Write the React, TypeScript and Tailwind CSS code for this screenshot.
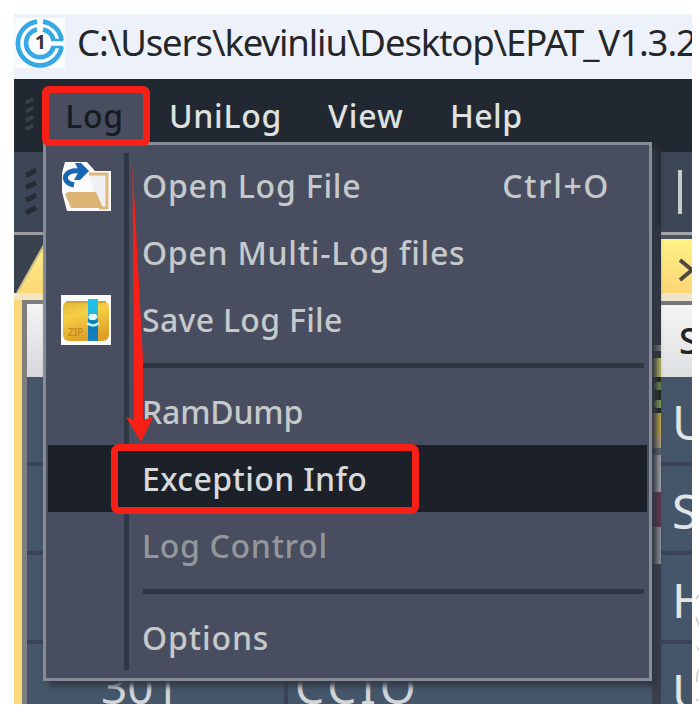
import React from "react";

type Entry = {
  label: string;
  text: string;
  shortcut?: string;
  icon?: React.ReactNode;
  row?: string;
};

function AppLogo() {
  return (
    <svg viewBox="0 0 50 50" className="h-[50px] w-[50px] shrink-0" fill="none">
      <rect width="50" height="50" fill="#fbfdff" />
      <g stroke="#35a9e5" strokeWidth="4.6">
        <path d="M22 3.6A22 22 0 1 0 46.6 29" />
        <path d="M28 3.6A22 22 0 0 1 46.6 22" />
        <path d="M22 11.5A14 14 0 1 0 38.5 29" />
        <path d="M28 11.5A14 14 0 0 1 38.5 22" />
        <path d="M36 22H48M36 29H48" strokeWidth="2.5" />
      </g>
      <text x="20" y="31" fontSize="19" fontWeight="700" fontFamily="Noto Sans" fill="#33323c">1</text>
    </svg>
  );
}

function FolderIcon() {
  return (
    <svg viewBox="0 0 50 50" className="h-[50px] w-[50px]">
      <path d="M4 1H26L34 10H50V50H6L1 31V12Z" fill="#fbfbfb" />
      <path d="M28 13H46V47H38" fill="#f0eff2" stroke="#dfb77c" strokeWidth="3" />
      <path d="M4 33L7 31H35L42 47H10Z" fill="#dcb474" />
      <path d="M13 24C-1 21 3 8 18 10" fill="none" stroke="#1767b3" strokeWidth="5" />
      <path d="M14 2H20L28 10L19 19H13L17 12H13V8H17Z" fill="#1767b3" />
    </svg>
  );
}

function ZipIcon() {
  return (
    <svg viewBox="0 0 50 50" className="h-[50px] w-[50px]">
      <defs>
        <linearGradient id="gold" x1="0" y1="0" x2="0.3" y2="1">
          <stop offset="0" stopColor="#dfb53a" />
          <stop offset="0.4" stopColor="#f6cf45" />
          <stop offset="1" stopColor="#dfa025" />
        </linearGradient>
        <linearGradient id="zipper" x1="0" y1="0" x2="0" y2="1">
          <stop offset="0" stopColor="#22c5e9" />
          <stop offset="0.35" stopColor="#28b6df" />
          <stop offset="0.55" stopColor="#087cba" />
          <stop offset="1" stopColor="#167fc0" />
        </linearGradient>
      </defs>
      <rect width="50" height="50" fill="#fafafa" />
      <rect x="2" y="6" width="46" height="40" rx="6" fill="url(#gold)" />
      <path d="M5 7H45" stroke="#c79a2a" strokeWidth="1.5" />
      <rect x="27" y="4" width="10" height="42" fill="url(#zipper)" />
      <path d="M29 19H35L37 22L34 25H29L27 22Z" fill="#dff8ff" />
      <path d="M26 28Q32 33 38 28" fill="none" stroke="#c5effb" strokeWidth="2.5" />
      <text x="7" y="41" fontSize="10" fontFamily="Noto Sans" fill="#b98220">ZIP</text>
    </svg>
  );
}

const groups: Entry[][] = [
  [
    { label: "Open Log File", text: "tracking-[0.8px] text-[#c5c9ca]", shortcut: "Ctrl+O", icon: <FolderIcon /> },
    { label: "Open Multi-Log files", text: "tracking-[0.75px] text-[#c5c9ca]" },
    { label: "Save Log File", text: "tracking-[0.3px] text-[#c5c9ca]", icon: <ZipIcon /> },
  ],
  [
    { label: "RamDump", text: "tracking-[-0.2px] text-[#c5c9ca]" },
    { label: "Exception Info", text: "tracking-[0.4px] text-[#d6dadb]", row: "bg-[#1c2129]" },
    { label: "Log Control", text: "tracking-[0.7px] text-[#949799]" },
  ],
  [{ label: "Options", text: "tracking-[0.9px] text-[#c5c9ca]" }],
];

function Menu() {
  return (
    <div className="absolute left-[43px] top-[142px] z-10 h-[539px] w-[609px] border-[3px] border-[#858c98] bg-[#484e60] pt-[7px] shadow-[5px_5px_6px_#303743]">
      <div className="absolute bottom-[8px] left-[78px] top-[8px] w-[5px] bg-[#303744]" />
      {groups.map((group, index) => (
        <div key={index} className="relative">
          {index > 0 && (
            <div className="flex h-[25px] items-center pl-[97px] pr-[5px]">
              <div className="h-[5px] w-full bg-[#303641]" />
            </div>
          )}
          {group.map((entry) => (
            <div key={entry.label} className={`mx-[2px] flex h-[67px] items-center ${entry.row ?? ""}`}>
              <div className="flex w-[94px] shrink-0 pl-[13px]">{entry.icon}</div>
              <span className={`whitespace-nowrap text-[32px] font-medium leading-none ${entry.text}`}>{entry.label}</span>
              {entry.shortcut && <span className="ml-auto mr-[37px] text-[32px] font-medium leading-none tracking-[1.6px] text-[#c5c9ca]">{entry.shortcut}</span>}
            </div>
          ))}
        </div>
      ))}
    </div>
  );
}

function Grip({ className }: { className: string }) {
  return (
    <svg viewBox="0 0 12 50" preserveAspectRatio="none" className={className}>
      <path d="M1 9L11 4M1 21L11 16M1 33L11 28M1 45L11 40" stroke="currentColor" strokeWidth="5" />
    </svg>
  );
}

const cells = ["U", "S", "H"];

function RightPane() {
  return (
    <div className="flex w-[31px] shrink-0 flex-col overflow-hidden bg-[#46566a]">
      <div className="flex h-[80px] shrink-0 justify-center bg-[#3c4656] pl-[7px] pt-[18px]">
        <div className="h-[44px] w-[4px] bg-[#c8cbd0]" />
      </div>
      <div className="h-[7px] shrink-0 border-t-[3px] border-[#a6a7aa] bg-[#4c5361]" />
      <div className="flex h-[54px] shrink-0 items-center bg-linear-to-b from-[#fff286] to-[#fcd575] pl-[17px] pt-[8px]">
        <svg viewBox="0 0 24 24" className="h-[24px] w-[24px] shrink-0" fill="none" stroke="#4b4940" strokeWidth="4">
          <path d="M2 2L14 12L2 22M26 2L14 12L26 22" />
        </svg>
      </div>
      <div className="h-[12px] shrink-0 border-b-[4px] border-[#77777b] bg-[#eee5cf]" />
      <div className="flex h-[72px] shrink-0 items-center bg-linear-to-b from-[#f5f5f5] to-[#dedfe1] pl-[18px] text-[36px] font-medium text-[#222326]">S</div>
      {cells.map((cell) => (
        <div key={cell} className="flex h-[89px] shrink-0 items-center border-b-[4px] border-[#3b435a] pl-[11px] pt-[5px] text-[48px] leading-none text-[#e2e5e7]">{cell}</div>
      ))}
      <div className="h-[60px] shrink-0 pl-[11px] pt-[17px] text-[48px] leading-[60px] text-[#e2e5e7]">U</div>
    </div>
  );
}

function HiddenIcons() {
  return (
    <div className="flex w-[9px] shrink-0 flex-col bg-[#383f4d]">
      <div className="h-[73px] shrink-0 bg-[#242a34]" />
      <div className="h-[120px] shrink-0 bg-[#303541]" />
      <div className="h-[6px] shrink-0 bg-[#77787a]" />
      <div className="h-[7px] shrink-0 bg-[#30343b]" />
      <div className="h-[19px] shrink-0 bg-[#b9b55b]" />
      <div className="flex h-[36px] shrink-0 flex-col justify-around bg-[#20251e] pl-[2px]">
        <div className="h-[8px] rounded-l-full bg-[#648b4a]" />
        <div className="h-[8px] rounded-l-full bg-[#7ca44e]" />
      </div>
      <div className="h-[24px] shrink-0 bg-[#c8aa4a]" />
      <div className="h-[11px] shrink-0 bg-[#b3a57e]" />
      <div className="h-[7px] shrink-0 bg-[#626469]" />
      <div className="h-[37px] shrink-0 bg-[#a7a8aa]" />
      <div className="h-[35px] shrink-0 bg-[#62334f]" />
      <div className="h-[37px] shrink-0 bg-[#929397]" />
    </div>
  );
}

function LeftPane() {
  return (
    <div className="flex min-w-0 flex-1 flex-col">
      <div className="flex h-[80px] shrink-0 bg-[#3c4656] pl-[11px] pt-[14px]">
        <Grip className="h-[52px] w-[12px] text-[#262b34]" />
      </div>
      <div className="h-[3px] shrink-0 bg-[#9b9c9d]" />
      <div className="h-[58px] shrink-0 bg-[#3a4250]">
        <svg viewBox="0 0 40 58" className="h-[58px] w-[40px]">
          <defs>
            <linearGradient id="tab" x1="0" y1="0" x2="0" y2="1">
              <stop offset="0" stopColor="#fff08d" />
              <stop offset="1" stopColor="#fcd876" />
            </linearGradient>
          </defs>
          <path d="M3 58L31 8H40V58Z" fill="url(#tab)" />
          <path d="M3 58L31 8" stroke="#c8bd86" strokeWidth="2" />
        </svg>
      </div>
      <div className="h-[7px] shrink-0 bg-[#f4e6bd]" />
      <div className="flex min-h-0 flex-1 border-l-[8px] border-[#fbd879]">
        <div className="min-w-0 flex-1 border-l-[5px] border-t-[4px] border-[#807f7f] bg-[#46566a]">
          <div className="h-[73px] bg-linear-to-b from-[#f5f5f5] to-[#d7d8dc]" />
          <div className="h-[89px] border-b-[4px] border-[#3b435a]" />
          <div className="h-[89px] border-b-[4px] border-[#3b435a]" />
          <div className="h-[89px] border-b-[4px] border-[#3b435a]" />
          <div className="flex h-[80px] pl-[74px] text-[46px] leading-[84px] text-[#d2d6da]">
            <span className="w-[183px] shrink-0">301</span>
            <span className="border-l-[4px] border-[#3b435a] pl-[7px] tracking-[4px]">CCIO</span>
          </div>
        </div>
      </div>
    </div>
  );
}

export default function App() {
  return (
    <div className="relative h-[710px] w-[699px] overflow-hidden bg-white pl-[14px] font-['Noto_Sans','Open_Sans',sans-serif]">
      <div className="flex h-[704px] w-[678px] flex-col overflow-hidden pt-[14px]">
        <div className="flex h-[65px] shrink-0 items-center bg-[#edf2fa] pb-[8px] pl-px">
          <AppLogo />
          <span className="ml-[12px] whitespace-nowrap text-[36.5px] leading-none tracking-[-1.1px] text-[#252629]">C:\Users\kevinliu\Desktop\EPAT_V1.3.2</span>
        </div>
        <div className="flex h-[73px] shrink-0 items-start bg-[#222831] pl-[11px] pt-[7px] text-[32px] font-medium leading-none text-[#dfe2e1]">
          <Grip className="mt-[10px] h-[37px] w-[9px] text-[#3b4048]" />
          <div className="ml-[8px] flex h-[60px] w-[108px] items-center justify-center rounded-[7px] bg-[#484e60] pr-[3px] tracking-[0.6px] text-[#171b22]">Log</div>
          <span className="ml-[19px] mt-[14px] w-[159px] tracking-[0.7px]">UniLog</span>
          <span className="mt-[14px] w-[122px] tracking-[1px]">View</span>
          <span className="mt-[14px] tracking-[0.4px]">Help</span>
        </div>
        <div className="flex min-h-0 flex-1 overflow-hidden">
          <LeftPane />
          <HiddenIcons />
          <RightPane />
        </div>
      </div>
      <Menu />
      <div className="absolute left-[42px] top-[86px] z-20 h-[60px] w-[108px] rounded-[7px] border-[7px] border-[#f71f16]" />
      <div className="absolute left-[111px] top-[444px] z-20 h-[70px] w-[308px] rounded-[8px] border-[7px] border-[#f71f16]" />
      <svg viewBox="0 0 30 280" className="absolute left-[125px] top-[164px] z-20 h-[280px] w-[30px]" fill="#f71f16">
        <path d="M7.5 0L18 196V256L28 253L16 278L1 253L9 256Z" />
      </svg>
      <svg viewBox="0 0 4 120" className="absolute left-[695px] top-[590px] h-[120px] w-[4px]" fill="none" stroke="#c9c9c9" strokeWidth="1.5">
        <path d="M4 5L1 9M1 27L4 36M2 57L4 60M4 80Q1 85 2 92M1 110H4" />
      </svg>
    </div>
  );
}
